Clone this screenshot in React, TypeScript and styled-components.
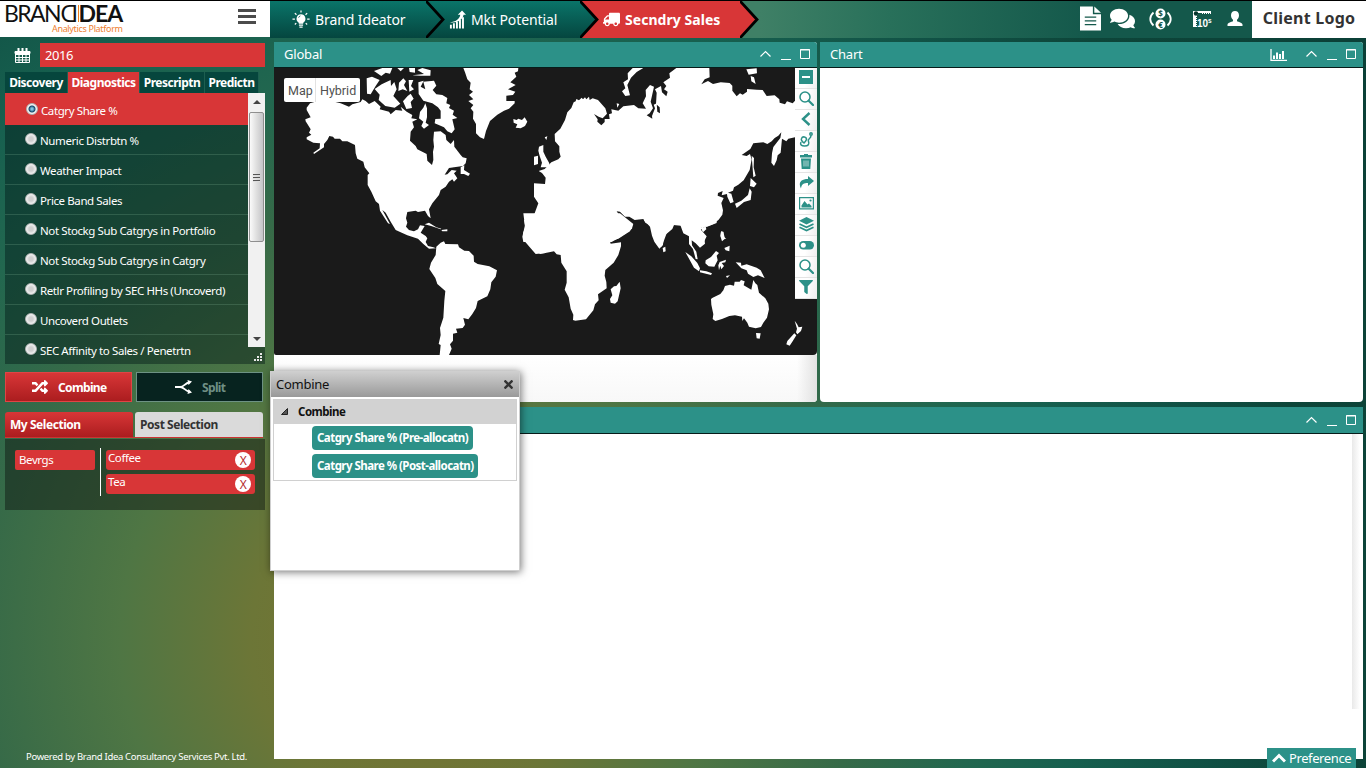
import React from 'react';
import styled, { createGlobalStyle, css } from 'styled-components';
import { FaComments, FaFilter, FaRandom, FaTimes, FaTruck } from 'react-icons/fa';

const teal = '#2c9188';
const red = '#d83637';

const GlobalStyle = createGlobalStyle`
  * { box-sizing: border-box; }
  body { margin: 0; overflow: hidden; font-family: "Noto Sans", "Open Sans", sans-serif; }
  svg { display: block; flex: none; }
`;

const Page = styled.div`
  position: relative;
  display: grid;
  grid-template-columns: 270px 1fr;
  width: 1366px;
  height: 768px;
  overflow: hidden;
  background: radial-gradient(circle at 420px 640px, #7b7230 0, #6c7637 170px, #4f7644 300px, #366a48 440px, #22674f 560px, #17604f 660px, #105044 800px, #0d4539 900px, #0b4037 1100px);
`;

const Sidebar = styled.aside`
  display: flex;
  flex-direction: column;
  height: 768px;
  border-top: 1px solid #000;
`;

const LogoBar = styled.div`
  display: flex;
  justify-content: space-between;
  height: 36px;
  padding: 0 14px 0 4px;
  background: #fff;
`;

const LogoMark = styled.div`
  width: 118px;
  color: #111;
  font-family: Lato, sans-serif;
`;

const LogoWord = styled.div`
  display: flex;
  align-items: center;
  height: 25px;
  font-size: 23px;
  line-height: 25px;
  letter-spacing: -1.6px;
`;

const FlippedD = styled.span`
  transform: scaleX(-1);
  margin-left: 2px;
`;

const OrangeBar = styled.span`
  width: 4px;
  height: 17px;
  margin: 0;
  background: #ee7f22;
`;

const Heavy = styled.span`
  font-weight: 700;
  letter-spacing: -1.1px;
`;

const LogoTag = styled.div`
  margin-top: -3px;
  padding-left: 48px;
  color: #ee8030;
  font: 9px/12px "Noto Sans", sans-serif;
  letter-spacing: -0.33px;
  white-space: nowrap;
`;

const Burger = styled.div`
  display: flex;
  flex-direction: column;
  gap: 3px;
  width: 18px;
  padding-top: 8px;
  span { height: 3px; background: #4b4b4b; }
`;

const YearRow = styled.div`
  display: flex;
  align-items: center;
  gap: 9px;
  height: 24px;
  margin: 6px 5px 0 14px;
`;

const YearField = styled.div`
  flex: 1;
  height: 24px;
  padding-left: 5px;
  background: ${red};
  color: #fff;
  font-size: 13px;
  line-height: 25px;
  letter-spacing: -0.4px;
`;

const TabRow = styled.div`
  display: flex;
  height: 21px;
  margin: 5px 5px 0;
`;

const Tab = styled.div<{ $w: number; $active?: boolean }>`
  width: ${p => p.$w}px;
  border-right: 1px solid #1d5e50;
  background: ${p => (p.$active ? red : '#06463d')};
  color: #fff;
  font-size: 12px;
  font-weight: 700;
  line-height: 22px;
  text-align: center;
  letter-spacing: -0.5px;
  white-space: nowrap;
`;

const MetricBox = styled.div`
  display: flex;
  height: 271px;
  margin: 0 5px;
  background: rgba(0, 20, 20, 0.43);
`;

const MetricList = styled.div`
  width: 243px;
`;

const Metric = styled.div<{ $active?: boolean }>`
  display: flex;
  align-items: center;
  height: 30px;
  padding: 2px 0 0 20px;
  gap: 3px;
  border-bottom: 1px solid rgba(140, 190, 160, 0.22);
  color: #fff;
  font-size: 11.5px;
  letter-spacing: -0.4px;
  white-space: nowrap;
  ${p => p.$active && css`
    height: 32px;
    padding: 3px 0 0 21px;
    background: ${red};
    border: 0;
  `}
  &:last-child { border-color: transparent; }
`;

const Radio = styled.span<{ $active?: boolean }>`
  width: 12px;
  height: 12px;
  margin-top: -3px;
  border: 1px solid #b0b5b4;
  border-radius: 50%;
  background: ${p => (p.$active
    ? 'radial-gradient(circle, #7fc4e2 0 1px, #164a6c 3px, #f4f4f4 4px)'
    : 'radial-gradient(circle, #cfcfcf 0 2px, #f4f4f4 5px)')};
`;

const ScrollColumn = styled.div`
  display: flex;
  flex-direction: column;
  align-items: flex-end;
  justify-content: space-between;
  width: 17px;
  padding-bottom: 2px;
`;

const ScrollTrack = styled.div`
  display: flex;
  flex-direction: column;
  align-items: center;
  justify-content: space-between;
  width: 17px;
  height: 254px;
  padding: 7px 0 6px;
  background: #f1f1f1;
`;

const ScrollThumb = styled.div`
  display: flex;
  flex-direction: column;
  align-items: center;
  justify-content: center;
  gap: 1px;
  width: 15px;
  height: 130px;
  margin: 8px 0 auto;
  border: 1px solid #8f8f8f;
  border-radius: 2px;
  background: linear-gradient(90deg, #fafafa, #dcdcdc 55%, #c4c4c8);
  span { width: 7px; height: 1px; background: #555; box-shadow: 0 1px #ddd; }
  span + span { margin-top: 1px; }
`;

const Arrow = styled.div<{ $down?: boolean }>`
  border: 4px solid transparent;
  border-width: ${p => (p.$down ? '4px 4px 0' : '0 4px 4px')};
  border-top-color: ${p => (p.$down ? '#444' : 'transparent')};
  border-bottom-color: ${p => (p.$down ? 'transparent' : '#444')};
`;

const ButtonRow = styled.div`
  display: flex;
  gap: 4px;
  height: 30px;
  margin: 8px 7px 0 5px;
`;

const ActionButton = styled.div<{ $disabled?: boolean }>`
  display: flex;
  align-items: center;
  width: 127px;
  gap: 10px;
  padding-left: ${p => (p.$disabled ? 38 : 26)}px;
  border: 1px solid ${p => (p.$disabled ? '#6d9284' : '#e04545')};
  background: ${p => (p.$disabled ? '#07231f' : 'linear-gradient(#d83637, #ab1d1f)')};
  color: ${p => (p.$disabled ? '#6f8f85' : '#fff')};
  font-size: 12px;
  font-weight: 700;
  letter-spacing: -0.65px;
  svg { color: #fff; }
`;

const SelectionTabs = styled.div`
  display: flex;
  gap: 2px;
  height: 26px;
  margin: 10px 7px 0 5px;
  border-bottom: 1px solid #c33;
`;

const SelectionTab = styled.div<{ $active?: boolean }>`
  flex: 1;
  padding-left: 5px;
  border-radius: 3px 3px 0 0;
  background: ${p => (p.$active ? 'linear-gradient(#d83637, #ab1d1f)' : '#dadada')};
  color: ${p => (p.$active ? '#fff' : '#333')};
  font-size: 12px;
  font-weight: 700;
  line-height: 26px;
  letter-spacing: -0.45px;
`;

const SelectionBox = styled.div`
  display: flex;
  height: 71px;
  margin: 1px 5px 0;
  padding: 9px 10px;
  background: rgba(15, 25, 20, 0.5);
  color: #fff;
  font-size: 11.5px;
  letter-spacing: -0.4px;
`;

const GroupTag = styled.div`
  width: 80px;
  height: 20px;
  margin: 2px 5px 0 0;
  padding-left: 4px;
  border-radius: 2px;
  background: ${red};
  line-height: 20px;
`;

const TagList = styled.div`
  display: flex;
  flex-direction: column;
  gap: 4px;
  height: 48px;
  padding: 2px 0 0 5px;
  border-left: 1px solid #fff;
`;

const Tag = styled.div`
  display: flex;
  justify-content: space-between;
  width: 149px;
  height: 20px;
  padding: 2px 4px 0 2px;
  border-radius: 3px;
  background: ${red};
  line-height: 12px;
`;

const TagClose = styled.span`
  width: 16px;
  height: 16px;
  border-radius: 50%;
  background: #fff;
  color: #b52c2c;
  font-size: 12px;
  line-height: 17px;
  text-align: center;
`;

const Powered = styled.div`
  margin: auto 0 4px;
  padding-left: 26px;
  color: #fff;
  font-size: 9.5px;
  line-height: 14px;
  letter-spacing: -0.32px;
  white-space: nowrap;
`;

const Main = styled.main`
  display: flex;
  flex-direction: column;
  height: 768px;
  min-width: 0;
`;

const TopBar = styled.header`
  display: flex;
  justify-content: space-between;
  height: 38px;
  border-top: 1px solid #000;
  background: linear-gradient(90deg, #3f8066 490px, #28705a 620px, #14584b 820px);
`;

const Crumbs = styled.nav`
  display: flex;
`;

const Crumb = styled.div<{ $w: number; $pad: number; $active?: boolean; $z: number }>`
  position: relative;
  z-index: ${p => p.$z};
  display: flex;
  align-items: center;
  gap: 5px;
  width: ${p => p.$w}px;
  padding-left: ${p => p.$pad}px;
  background: ${p => (p.$active ? red : 'linear-gradient(#0a7469, #05463f)')};
  color: #fff;
  font-size: 14px;
  letter-spacing: ${p => (p.$active ? 0.05 : -0.1)}px;
  font-weight: ${p => (p.$active ? 700 : 400)};
  white-space: nowrap;
`;

const CrumbEdge = styled.svg`
  position: absolute;
  top: 0;
  left: 100%;
`;

const FlippedTruck = styled(FaTruck)`
  transform: scaleX(-1);
`;

const TopTools = styled.div`
  display: flex;
  align-items: center;
  color: #fff;
`;

const ToolSlot = styled.div<{ $gap: number }>`
  margin: -2px ${p => p.$gap}px 0 0;
`;

const ClientLogo = styled.div`
  width: 114px;
  height: 37px;
  background: #fff;
  color: #333;
  font-size: 16px;
  font-weight: 700;
  line-height: 35px;
  text-align: center;
  letter-spacing: 0.25px;
`;

const Panels = styled.div`
  display: flex;
  flex-direction: column;
  gap: 5px;
  height: 717px;
  margin: 4px 3px 0 4px;
`;

const PanelRow = styled.div`
  display: flex;
  gap: 3px;
  height: 360px;
`;

const Panel = styled.section<{ $square?: boolean }>`
  position: relative;
  display: flex;
  flex-direction: column;
  flex: 1;
  overflow: hidden;
  border-radius: ${p => (p.$square ? '0' : '0 3px 4px 4px')};
  background: #fff;
`;

const PanelHead = styled.div<{ $tall?: boolean }>`
  display: flex;
  align-items: center;
  justify-content: space-between;
  flex: none;
  height: ${p => (p.$tall ? 27 : 26)}px;
  padding: 0 7px 1px 10px;
  border-bottom: 1px solid #071c1a;
  background: ${teal};
  color: #fff;
  font-size: 13px;
  letter-spacing: -0.2px;
`;

const PanelFoot = styled.div`
  flex: 1;
  background: linear-gradient(270deg, #e2e2e2, rgba(255,255,255,0) 20px), linear-gradient(#fff, #f8f8f8);
`;

const MapArea = styled.div`
  position: relative;
  height: 287px;
  overflow: hidden;
  border-radius: 0 0 4px 2px;
  background: #1a1a1a;
`;

const MapModes = styled.div`
  position: absolute;
  top: 10px;
  left: 10px;
  display: flex;
  height: 24px;
  border-radius: 2px;
  overflow: hidden;
  background: #fff;
  color: #505050;
  font: 12.5px/25px Roboto, sans-serif;
  span { padding-left: 4px; }
  span:first-child { width: 32px; border-right: 1px solid #e2e2e2; }
  span:last-child { width: 44px; }
`;

const MapTools = styled.div`
  position: absolute;
  top: 0;
  right: 0;
  width: 22px;
  color: ${teal};
`;

const MapTool = styled.div`
  display: flex;
  align-items: center;
  justify-content: center;
  height: 21px;
  padding-bottom: 2px;
  border-bottom: 1px solid #e4e4e4;
  background: linear-gradient(100deg, #fff 50%, #eee);
`;

const ScrollShade = styled.div`
  width: 8px;
  height: 275px;
  margin-left: auto;
  margin-right: 3px;
  background: linear-gradient(90deg, #e9e9e9, #fff);
`;

const Dialog = styled.div`
  position: absolute;
  z-index: 5;
  top: 371px;
  left: 270px;
  width: 250px;
  height: 200px;
  border: 1px solid #cfcfcf;
  background: #fff;
  box-shadow: 1px 1px 8px rgba(0, 0, 0, 0.55);
  color: #111;
`;

const DialogHead = styled.div`
  display: flex;
  align-items: center;
  justify-content: space-between;
  height: 25px;
  padding: 0 4px 1px 5px;
  background: linear-gradient(#cecece, #999);
  font-size: 13px;
  letter-spacing: -0.25px;
`;

const TreeBox = styled.div`
  display: flex;
  flex-direction: column;
  align-items: flex-start;
  gap: 4px;
  height: 82px;
  margin: 2px;
  border: 1px solid #d0d0d0;
  font-size: 11.5px;
  font-weight: 700;
  letter-spacing: -0.5px;
`;

const TreeHead = styled.div`
  display: flex;
  align-items: center;
  gap: 10px;
  align-self: stretch;
  height: 24px;
  margin-bottom: -2px;
  padding: 0 0 2px 7px;
  background: #d2d2d2;
`;

const TreeItem = styled.div<{ $w: number }>`
  width: ${p => p.$w}px;
  height: 24px;
  margin-left: 38px;
  padding-left: 5px;
  border-radius: 4px;
  background: ${teal};
  color: #fff;
  line-height: 24px;
  letter-spacing: -0.54px;
  white-space: nowrap;
`;

const Preference = styled.div`
  position: absolute;
  right: 10px;
  bottom: 0;
  display: flex;
  align-items: center;
  gap: 3px;
  width: 89px;
  height: 20px;
  padding-left: 5px;
  background: ${teal};
  color: #fff;
  font-size: 13px;
  letter-spacing: -0.4px;
`;

const CalendarIcon = () => (
  <svg width="17" height="17" viewBox="0 0 17 17" fill="none" stroke="#fff">
    <path d="M1.5 4.5h14v11h-14zM1 7.5h15M1 10.5h15M1 13h15M5 7v9M8.5 7v9M12 7v9" />
    <path d="M1 4.5h15v2H1z" fill="#fff" />
    <path d="M4.5 1v4M8.5 1v4M12.5 1v4" strokeWidth="2" />
  </svg>
);

const SplitIcon = () => (
  <svg width="17" height="14" viewBox="0 0 17 14" fill="none" stroke="#fff" strokeWidth="1.8">
    <path d="M0 7h5C9 7 10 3 14 2.5M5 7c4 0 5 4 9 4.5" />
    <path d="M12.5 0 17 1.5 13.5 5zM13.500 9l3.500 3.500-4.500 1.500z" fill="#fff" stroke="none" />
  </svg>
);

const BulbIcon = () => (
  <svg width="18" height="19" viewBox="0 0 19 19" fill="#fff" stroke="#fff">
    <path d="M9.5 4a4.7 4.7 0 0 0-2.6 8.6L7.3 14h4.4l.4-1.4A4.7 4.7 0 0 0 9.5 4z" stroke="none" />
    <path d="M7.3 15.5h4.4M7.8 17.5h3.4M9.5 0v2.2M0.5 9h2.6M16 9h2.6M3 2.8l1.7 1.7M16 2.8l-1.7 1.7M3 14.7 4.5 13.3M16 14.7l-1.5-1.4" strokeWidth="1.3" />
    <path d="M7 7.5a3 3 0 0 1 1.8-1.8" stroke="#0a6057" fill="none" />
  </svg>
);

const GrowthIcon = () => (
  <svg width="17" height="19" viewBox="0 0 18 19" fill="#fff">
    <path d="M1 15h2v4H1zM4.2 13.5h2V19h-2zM7.4 12h2v7h-2zM10.6 10h2v9h-2zM13.8 7h2v12h-2z" />
    <path d="M1 12.5c6-.5 10-3 11-8H9.3L13.8 0 18 4.5h-2.6c-1 6-7 9-14.4 8z" />
  </svg>
);

const CurrencyIcon = () => (
  <svg width="23" height="22" viewBox="0 0 23 22">
    <g fill="none" stroke="#fff" strokeWidth="1.8"><path d="M4.5 4.5C.2 8.5.2 13.5 4.5 17.5M18.5 4.5c4.3 4 4.3 9 0 13" /></g>
    <circle cx="11.5" cy="5.5" r="5" fill="#fff" /><circle cx="11.5" cy="16.5" r="5" fill="#fff" />
    <g fontFamily="Noto Sans" fontSize="8" fontWeight="700" fill="#14584b" textAnchor="middle">
      <text x="11.5" y="8.500">$</text><text x="11.5" y="19.500">€</text>
    </g>
  </svg>
);

const RulerIcon = () => (
  <svg width="20" height="20" viewBox="0 0 20 20" fill="#fff">
    <path d="M1 2h18v3h-1V4h-1v1h-1V4h-1v1h-1V4h-1v1h-1V4h-1v1h-1V4H6v2H5v2H4v1h1v1H4v1h1v1H4v1h1v1H4v1h1v1H4v1h1v1H1z" />
    <circle cx="4" cy="4.500" r="2.200" fill="#06352d" />
    <g fontFamily="Liberation Sans" fontWeight="700"><text x="5" y="17.500" fontSize="10">10</text><text x="16" y="13.500" fontSize="6.500">s</text></g>
  </svg>
);

const PersonIcon = () => (
  <svg width="16" height="16" viewBox="0 0 16 16" fill="#fff">
    <path d="M8 0c2.400 0 4 1.600 4 4.200 0 2-.9 3.800-2 4.600v1.500c1.500 1 5 1 5.500 3.200V15H.5v-1.500C1 11.300 4.500 11.300 6 10.300V8.800C4.900 8 4 6.200 4 4.200 4 1.600 5.600 0 8 0z" />
  </svg>
);

const ChartIcon = () => (
  <svg width="17" height="12" viewBox="0 0 17 12" fill="none" stroke="#fff">
    <path d="M1 0v11.400h16" strokeWidth="1.300" /><path d="M4 10V6.500M7 10V3.500M10 10V5M13 10V2" strokeWidth="2" />
  </svg>
);

const WindowIcons = ({ chart }: { chart?: boolean }) => (
  <svg width="86" height="14" viewBox="0 0 86 14" fill="none" stroke="#fff">
    {chart && <g transform="translate(0 2)"><ChartIcon /></g>}
    <path d="m36.500 9.500 5-5 5 5M57 12.500h10" strokeWidth="1.200" />
    <path d="M76.500 2.500h9v9h-9zM76 3h10" />
  </svg>
);

const SearchIcon = () => (
  <svg width="15" height="15" viewBox="0 0 15 15" fill="none" stroke={teal}>
    <circle cx="6" cy="6" r="5" strokeWidth="1.500" /><path d="m9.700 9.700 4.300 4.300" strokeWidth="2.200" strokeLinecap="round" />
  </svg>
);

const toolIcons: React.ReactNode[] = [
  <svg width="14" height="14" viewBox="0 0 14 14"><path d="M0 0h14v14H0z" fill={teal} /><path d="M3 6h8v2H3z" fill="#fff" /></svg>,
  <SearchIcon />,
  <svg width="12" height="14" viewBox="0 0 12 14" fill="none" stroke={teal} strokeWidth="2.400"><path d="M9.500 1 3 7l6.500 6" /></svg>,
  <svg width="14" height="16" viewBox="0 0 14 16" fill="none" stroke={teal} strokeWidth="1.500"><path d="M5 11C2.500 9 2 7.500 2.500 6.500a2.600 2.600 0 0 1 5 1C7 9 6 10 5 11zM2 10c-1.500 3 1 4 3.500 4 4 0 5-2 4-4.500C8 7 12 7 12 3.500" /><circle cx="12" cy="2" r="1.200" /></svg>,
  <svg width="12" height="15" viewBox="0 0 12 15" fill={teal}><path d="M4 0h4v1h4v2.500H0V1h4zM1 4.500h10L10.300 15H1.700z" /><path d="M4 6.500v6M6 6.500v6M8 6.500v6" stroke="#b9dad7" /></svg>,
  <svg width="15" height="13" viewBox="0 0 15 13" fill={teal}><path d="M9 0l6 5-6 5V7C5 7 2.500 8 2 12.500-.5 8 .5 3 9 3z" /></svg>,
  <svg width="15" height="13" viewBox="0 0 15 13" fill={teal}><path d="M.6.600h13.800v11.300H.6z" fill="none" stroke={teal} strokeWidth="1.200" /><path d="M2.500 10.500V8.500L5.500 4l3 3.500 1.500-1 2.500 2.500v1.500z" /><circle cx="11.500" cy="3.500" r="1.100" /></svg>,
  <svg width="15" height="15" viewBox="0 0 15 15"><path d="m7.500 0 7.500 3.700-7.500 3.700L0 3.700z" fill={teal} /><path d="m.5 7 7 3.300 7-3.300M.5 10.300l7 3.300 7-3.300" fill="none" stroke={teal} strokeWidth="1.700" /></svg>,
  <svg width="15" height="9" viewBox="0 0 15 9"><rect width="15" height="8.500" rx="4.200" fill={teal} /><circle cx="4.300" cy="4.200" r="2.500" fill="#fff" /></svg>,
  <SearchIcon />,
  <FaFilter size={14} />,
];

const edge = (
  <CrumbEdge width="22" height="37" viewBox="0 0 22 37">
    <path d="M0 0 17 18.500 0 37" fill="none" stroke="#000" strokeWidth="2.800" />
  </CrumbEdge>
);

const CrumbFill = ({ active }: { active?: boolean }) => (
  <CrumbEdge width="19" height="37" viewBox="0 0 19 37">
    <defs><linearGradient id="crumb" x2="0" y2="1"><stop stopColor="#0a7469" /><stop offset="1" stopColor="#05463f" /></linearGradient></defs>
    <path d="M-1 0H0l17 18.500L0 37h-1z" fill={active ? red : 'url(#crumb)'} />
  </CrumbEdge>
);

/* Land outlines, one group for each quadrant of the world view. */
const WorldMap = () => (
  <svg width="543" height="287" viewBox="0 0 543 287" fill="#fff">
    <g transform="translate(0 -28) scale(.33333)">
      <path d="M108 190 150 178 200 190 225 200 235 193 260 186 265 178 275 183 285 192 302 183 320 200 317 208 345 215 350 223 365 210 385 212 380 200 398 215 415 225 412 235 430 238 415 245 420 262 410 275 408 302 425 318 430 328 458 342 460 362 474 375 478 360 477 335 480 320 478 300 480 275 500 274 515 285 517 300 530 312 540 300 541 320 560 345 566 352 578 355 575 370 567 378 540 382 525 384 512 404 520 403 533 390 548 392 540 400 550 415 540 425 535 418 525 425 515 440 500 450 495 465 475 490 465 508 470 535 462 528 453 512 432 516 425 512 400 516 396 535 400 548 396 560 405 570 420 574 432 568 438 556 452 558 440 578 455 588 460 595 455 606 462 618 478 622 486 625 465 626 448 612 432 596 400 586 365 570 350 545 335 518 325 510 348 552 342 550 318 512 315 492 305 484 292 455 281 435 281 405 286 400 272 382 268 365 250 356 245 340 243 315 220 304 205 304 198 296 182 296 177 290 166 288 160 300 150 312 150 322 120 342 118 338 137 325 138 310 118 308 98 298 98 292 112 284 105 278 110 268 95 244 94 238 110 232 98 210 98 203Z" />
      <path d="M568 84 573 97 580 118 590 128 587 148 597 155 585 165 598 178 583 183 598 195 590 205 598 215 597 236 606 252 606 280 618 292 630 297 636 273 648 243 670 224 690 212 705 206 722 190 722 183 697 183 697 167 717 165 724 155 702 148 725 135 709 127 727 110 722 98 732 94 733 84Z" />
      <path d="M718 237 728 240 733 236 744 240 752 232 760 245 753 258 740 265 725 263 730 253 719 248ZM278 115 294 110 317 120 305 138 290 163 279 161ZM302 147 323 133 350 120 351 138 361 126 368 148 358 168 379 191 362 203 334 198 314 180 317 164ZM375 128 388 115 396 124 390 135 400 153 386 148 373 153ZM404 120 418 120 411 138 420 148 406 155ZM300 93 325 84 355 84 348 101 335 98 322 108ZM405 84 423 84 423 98 407 96ZM415 106 450 102 430 90 445 84 470 91 469 107 440 107ZM370 84 390 84 380 94ZM433 127 449 122 440 140 454 148 448 125 480 122 487 137 476 150 487 163 505 165 520 174 517 190 529 195 525 204 540 212 536 224 550 234 535 238 542 268 533 280 520 274 510 262 482 250 484 237 500 236 500 212 492 202 475 190 448 182 434 162ZM401 168 410 161 419 176 410 186 414 204 397 207 387 184ZM438 216 448 203 454 190 459 205 459 232 455 248 465 255 450 266 442 258 448 245 435 235ZM560 382 571 376 570 390 588 401 583 408 570 402 560 402ZM452 553 465 548 487 562 502 566 500 568 474 559ZM502 570 520 568 520 574 505 574Z" />
      <path d="M780 350 792 347 792 372 780 376ZM795 320 808 315 808 335 815 350 826 370 825 382 800 382 804 368 797 348 793 332Z" />
    </g>
    <g transform="translate(266 -28) scale(.33333)">
      <path d="M-18 430 15 432 17 413 6 399 -4 393 14 387 34 367 55 358 62 350 58 335 58 319 68 308 75 319 75 332 92 337 96 331 92 349 65 352 58 319 45 304 44 282 61 266 75 240 82 217 94 204 101 187 107 184 109 177 117 181 125 173 129 178 135 172 139 178 147 170 149 180 158 175 174 180 196 205 201 221 188 235 176 230 162 222 173 238 172 245 184 256 194 246 194 237 209 237 207 223 216 220 214 208 235 212 250 199 282 195 295 205 318 206 308 190 318 169 317 150 330 135 342 140 332 185 339 205 329 220 320 226 337 236 336 228 345 205 341 194 350 190 352 215 360 220 359 202 348 192 350 158 345 148 363 138 366 157 379 169 383 155 372 148 379 138 370 127 390 113 388 100 409 84 508 84 509 112 494 118 484 133 504 123 519 132 542 127 569 129 577 137 577 152 590 169 600 160 608 164 621 155 621 147 631 148 650 149 668 150 680 168 704 166 718 178 719 188 735 193 741 184 758 190 765 182 765 292 745 296 739 304 726 296 722 338 713 346 710 361 702 378 694 368 696 340 700 321 721 294 724 277 715 287 704 294 695 304 682 312 670 307 640 310 631 327 605 345 620 348 630 342 635 358 629 390 611 421 595 434 582 442 579 452 564 458 574 461 581 486 571 490 562 470 561 462 545 466 548 453 534 459 533 467 551 474 544 489 549 511 547 524 536 539 520 552 500 560 483 562 480 566 500 589 490 610 470 610 430 558 400 555 380 580 365 620 345 600 340 575 334 558 316 548 310 537 284 540 268 530 255 530 240 515 230 514 239 527 245 540 261 541 265 550 279 552 276 566 240 592 215 606 -50 606 -53 590 -45 555 -18 525 -5 490 -18 470Z" />
      <path d="M278 84 310 84 290 96 273 113 262 135 270 166 256 168 246 154 256 145 250 127 264 118 263 100ZM619 88 650 85 651 100 626 104ZM632 108 642 112 647 132 634 124ZM635 347 642 354 641 382 647 407 640 412ZM632 414 650 431 642 442 630 438ZM629 445 635 455 632 480 612 486 590 504 585 491 604 482 624 465ZM543 575 550 576 555 596 546 604 541 588Z" />
      <path d="M14 292 22 289 19 300ZM77 322 88 325 84 336ZM230 190 238 192 232 203Z" />
    </g>
    <g transform="translate(0 152) scale(.33333)">
      <path d="M487 80 500 68 510 64 514 72 552 73 555 82 571 92 585 93 599 107 600 125 611 132 646 139 669 151 665 170 652 187 649 208 640 229 611 243 606 264 595 282 583 298 568 294 573 314 566 324 546 326 550 338 537 341 537 362 528 373 533 386 525 405 497 405 500 375 494 372 500 345 498 324 508 293 511 242 514 213 490 192 484 174 466 147 471 128 485 105Z" />
      <path d="M750 0 754 22 747 40 752 64 770 85 785 102 815 99V0Z" />
    </g>
    <g transform="translate(266 152) scale(.33333)">
      <path d="M-40 60 0 102 20 98 42 94 50 103 62 105 64 128 80 154 80 188 74 209 86 232 92 266 100 284 99 300 106 302 138 298 160 271 165 253 176 241 174 223 200 205 199 186 194 167 196 150 221 128 235 105 243 79 243 67 212 71 210 64 235 56 270 34 280 12 240 -20 -50 -20ZM239 185 242 205 233 244 225 251 212 248 210 237 217 226 212 208 222 199 229 198ZM312 0 330 20 336 47 343 65 358 86 369 75 371 49 397 27 403 13 419 10 430 40 447 49 447 72 459 87 467 117 473 118 469 95 456 76 455 61 467 70 480 83 495 71 493 53 481 35 484 23 505 19 530 9V-20H312ZM368 84 376 80 377 94 370 97ZM483 25 497 19 499 28 489 37ZM436 96 454 109 472 129 480 145 477 154 462 143ZM480 151 499 154 516 160 513 165 480 157ZM497 121 513 111 528 93 537 99 530 107 533 121 523 140 506 139 496 130ZM539 126 558 119 556 127 545 129 552 138 544 148 541 137 537 151 535 136ZM543 34 550 35 551 50 559 56 550 57 542 49ZM553 84 569 77 568 94 557 91ZM587 127 603 128 604 137 620 133 650 143 662 151 674 174 654 166 640 171 624 161 620 151 604 145ZM558 168 570 166 561 174Z" />
      <path d="M518 233 541 222 550 211 555 198 570 194 582 197 584 185 599 185 603 180 614 184 611 196 634 209 640 180 646 190 652 195 657 218 676 235 685 251 687 268 681 293 670 308 663 321 647 325 627 320 622 308 612 295 607 303 606 290 585 286 568 288 546 297 526 303 518 297 520 283 514 254 513 237ZM648 339 662 340 659 356 650 355ZM764 302 771 312 776 322 787 320 783 333 772 343 768 337 771 326ZM763 340 769 346 757 365 749 377 739 373 742 363Z" />
    </g>
  </svg>
);

const metrics = [
  'Catgry Share %', 'Numeric Distrbtn %', 'Weather Impact', 'Price Band Sales',
  'Not Stockg Sub Catgrys in Portfolio', 'Not Stockg Sub Catgrys in Catgry',
  'Retlr Profiling by SEC HHs (Uncoverd)', 'Uncoverd Outlets', 'SEC Affinity to Sales / Penetrtn',
];

export default function App() {
  return (
    <Page>
      <GlobalStyle />
      <Sidebar>
        <LogoBar>
          <LogoMark>
            <LogoWord>BRAN<FlippedD>D</FlippedD><OrangeBar /><Heavy>DEA</Heavy></LogoWord>
            <LogoTag>Analytics Platform</LogoTag>
          </LogoMark>
          <Burger><span /><span /><span /></Burger>
        </LogoBar>
        <YearRow><CalendarIcon /><YearField>2016</YearField></YearRow>
        <TabRow>
          <Tab $w={63}>Discovery</Tab>
          <Tab $w={72} $active>Diagnostics</Tab>
          <Tab $w={65}>Prescriptn</Tab>
          <Tab $w={54}>Predictn</Tab>
        </TabRow>
        <MetricBox>
          <MetricList>
            {metrics.map((m, i) => (
              <Metric key={m} $active={i === 0}><Radio $active={i === 0} />{m}</Metric>
            ))}
          </MetricList>
          <ScrollColumn>
            <ScrollTrack>
              <Arrow />
              <ScrollThumb><span /><span /><span /></ScrollThumb>
              <Arrow $down />
            </ScrollTrack>
            <svg width="11" height="9" viewBox="0 0 11 9" fill="#e8e8e8">
              <path d="M6 0h2v2H6zM6 3h2v2H6zM3 3h2v2H3zM6 6h2v2H6zM3 6h2v2H3zM0 6h2v2H0z" />
            </svg>
          </ScrollColumn>
        </MetricBox>
        <ButtonRow>
          <ActionButton><FaRandom size={16} />Combine</ActionButton>
          <ActionButton $disabled><SplitIcon />Split</ActionButton>
        </ButtonRow>
        <SelectionTabs>
          <SelectionTab $active>My Selection</SelectionTab>
          <SelectionTab>Post Selection</SelectionTab>
        </SelectionTabs>
        <SelectionBox>
          <GroupTag>Bevrgs</GroupTag>
          <TagList>
            <Tag>Coffee<TagClose>X</TagClose></Tag>
            <Tag>Tea<TagClose>X</TagClose></Tag>
          </TagList>
        </SelectionBox>
        <Powered>Powered by Brand Idea Consultancy Services Pvt. Ltd.</Powered>
      </Sidebar>
      <Main>
        <TopBar>
          <Crumbs>
            <Crumb $w={156} $pad={22} $z={3}><BulbIcon />Brand Ideator<CrumbFill />{edge}</Crumb>
            <Crumb $w={154} $pad={23} $z={2}><GrowthIcon />Mkt Potential<CrumbFill />{edge}</Crumb>
            <Crumb $w={160} $pad={23} $z={1} $active>
              <FlippedTruck size={17} />Secndry Sales<CrumbFill active />{edge}
            </Crumb>
          </Crumbs>
          <TopTools>
            <ToolSlot $gap={9}>
              <svg width="21" height="25" viewBox="0 0 22 25"><path d="M0 0h13.500v8H22v17H0z" fill="#fff" /><path d="M15 0v6.500h7z" fill="#fff" /><path d="M5 11h12M5 15h12M5 19h12" stroke="#14584b" strokeWidth="1.400" /></svg>
            </ToolSlot>
            <ToolSlot $gap={14}><FaComments size={25} /></ToolSlot>
            <ToolSlot $gap={20}><CurrencyIcon /></ToolSlot>
            <ToolSlot $gap={15}><RulerIcon /></ToolSlot>
            <ToolSlot $gap={9}><PersonIcon /></ToolSlot>
            <ClientLogo>Client Logo</ClientLogo>
          </TopTools>
        </TopBar>
        <Panels>
          <PanelRow>
            <Panel>
              <PanelHead>Global<WindowIcons /></PanelHead>
              <MapArea>
                <WorldMap />
                <MapModes><span>Map</span><span>Hybrid</span></MapModes>
                <MapTools>{toolIcons.map((icon, i) => <MapTool key={i}>{icon}</MapTool>)}</MapTools>
              </MapArea>
              <PanelFoot />
            </Panel>
            <Panel><PanelHead>Chart<WindowIcons chart /></PanelHead></Panel>
          </PanelRow>
          <Panel $square>
            <PanelHead $tall><span /><WindowIcons /></PanelHead>
            <ScrollShade />
          </Panel>
        </Panels>
      </Main>
      <Dialog>
        <DialogHead>Combine<FaTimes size={13} color="#333" /></DialogHead>
        <TreeBox>
          <TreeHead>
            <svg width="7" height="7" viewBox="0 0 7 7"><path d="M6.5.5v6h-6z" fill="#555" stroke="#222" /></svg>
            Combine
          </TreeHead>
          <TreeItem $w={161}>Catgry Share % (Pre-allocatn)</TreeItem>
          <TreeItem $w={166}>Catgry Share % (Post-allocatn)</TreeItem>
        </TreeBox>
      </Dialog>
      <Preference>
        <svg width="14" height="10" viewBox="0 0 14 10" fill="none" stroke="#fff" strokeWidth="3"><path d="m1 8.500 6-6 6 6" /></svg>
        Preference
      </Preference>
    </Page>
  );
}
